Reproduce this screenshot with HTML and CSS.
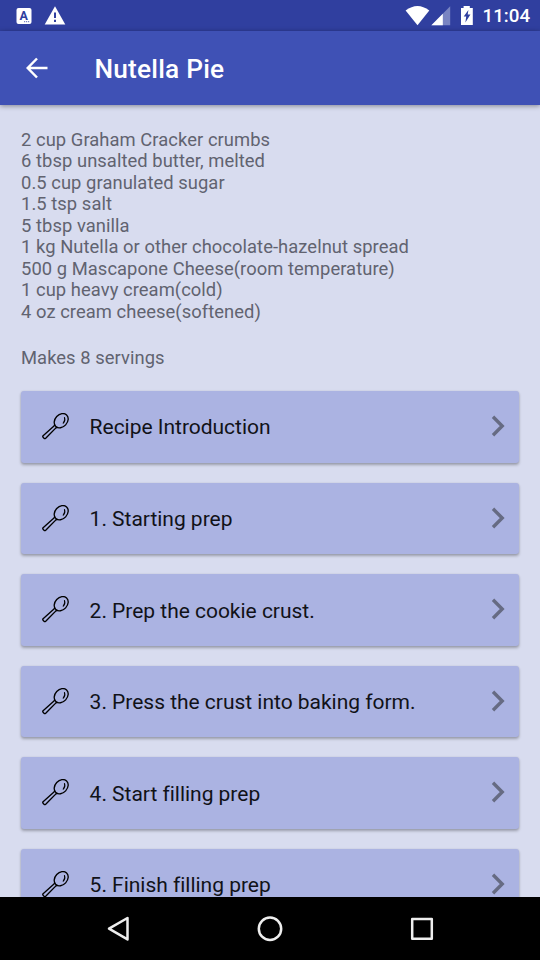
FILE: index.html
```
<!DOCTYPE html>
<html lang="en">
<head>
<meta charset="utf-8">
<title>Nutella Pie</title>
<link rel="stylesheet" href="styles.css">
</head>
<body>
<svg class="defs" aria-hidden="true">
  <symbol id="spoon" viewBox="0 0 28 28">
    <g fill="none" stroke="#000" stroke-width="1.35" stroke-linejoin="round" stroke-linecap="round">
      <ellipse cx="19.2" cy="7.7" rx="7.9" ry="6.1" transform="rotate(-47 19.2 7.7)"/>
      <path d="M12.8 12L11.7 13.3L1.1 22.7Q.4 23.5 1.1 24.3L2.1 25.4Q2.9 26 3.7 25.3L13.7 15.1L15 14.1"/>
      <path d="M22.5 4.6C23.2 6.7 22.5 8.9 21.2 10.2" stroke-width="1.15"/>
    </g>
  </symbol>
  <symbol id="chevron" viewBox="0 0 14 22">
    <path d="M2 1.8L11.2 11L2 20.2" fill="none" stroke="#666b83" stroke-width="3.4"/>
  </symbol>
</svg>
<div class="screen">
  <header class="status">
    <svg class="status-left" width="70" height="31" viewBox="0 0 70 31">
      <rect x="16.5" y="8" width="15" height="16" rx="2" fill="#fff"/>
      <text x="23.7" y="19.7" class="key" text-anchor="middle">A</text>
      <path d="M24 21.7h6" stroke="#303f9f" stroke-width=".8" stroke-dasharray="1.2 .8"/>
      <path d="M55 6.2L65.3 24.5H44.7Z" fill="#fff"/>
      <path d="M55 12.5v5.5M55 19.7v2.3" stroke="#303f9f" stroke-width="2"/>
    </svg>
    <svg class="status-right" width="76" height="31" viewBox="0 0 76 31">
      <path d="M5.6 10.5Q17.5 1.5 29.3 10.5L17.5 25.2Z" fill="#fff"/>
      <path d="M50.2 6.3V25.2H31.4Z" fill="#7984c2"/>
      <path d="M42.8 13.7V25.2H31.4Z" fill="#fff"/>
      <path d="M61 8h2.6V6h6.2v2h3V25H61Z" fill="#fff"/>
      <path d="M68.4 10L63.7 16.5h2.5l-.8 6L70.4 14.5h-2.7Z" fill="#303f9f"/>
    </svg>
    <span class="clock">11:04</span>
  </header>
  <div class="toolbar">
    <svg class="back" width="22" height="22" viewBox="0 0 22 22">
      <path d="M21.5 11H2M11 1.5L1.7 11L11 20.5" fill="none" stroke="#fff" stroke-width="2.5"/>
    </svg>
    <h1>Nutella Pie</h1>
  </div>
  <main class="content">
    <ul class="ingredients">
      <li>2 cup Graham Cracker crumbs</li>
      <li>6 tbsp unsalted butter, melted</li>
      <li>0.5 cup granulated sugar</li>
      <li>1.5 tsp salt</li>
      <li>5 tbsp vanilla</li>
      <li>1 kg Nutella or other chocolate-hazelnut spread</li>
      <li>500 g Mascapone Cheese(room temperature)</li>
      <li>1 cup heavy cream(cold)</li>
      <li>4 oz cream cheese(softened)</li>
    </ul>
    <p class="servings">Makes 8 servings</p>
    <div class="steps">
      <div class="card"><svg class="spoon"><use href="#spoon"/></svg><span>Recipe Introduction</span><svg class="chevron"><use href="#chevron"/></svg></div>
      <div class="card"><svg class="spoon"><use href="#spoon"/></svg><span>1. Starting prep</span><svg class="chevron"><use href="#chevron"/></svg></div>
      <div class="card"><svg class="spoon"><use href="#spoon"/></svg><span>2. Prep the cookie crust.</span><svg class="chevron"><use href="#chevron"/></svg></div>
      <div class="card"><svg class="spoon"><use href="#spoon"/></svg><span>3. Press the crust into baking form.</span><svg class="chevron"><use href="#chevron"/></svg></div>
      <div class="card"><svg class="spoon"><use href="#spoon"/></svg><span>4. Start filling prep</span><svg class="chevron"><use href="#chevron"/></svg></div>
      <div class="card"><svg class="spoon"><use href="#spoon"/></svg><span>5. Finish filling prep</span><svg class="chevron"><use href="#chevron"/></svg></div>
    </div>
  </main>
  <nav class="navbar">
    <svg width="28" height="28" viewBox="0 0 28 28"><path d="M23.5 3V24.4L5 13.7Z"/></svg>
    <svg width="28" height="28" viewBox="0 0 28 28"><circle cx="14" cy="13.8" r="11.2"/></svg>
    <svg width="28" height="28" viewBox="0 0 28 28"><rect x="4.2" y="3.9" width="19.6" height="19.8"/></svg>
  </nav>
</div>
</body>
</html>
```
FILE: styles.css
```
* { box-sizing: border-box; }
body { margin: 0; font-family: Roboto, "Liberation Sans", sans-serif; }
.defs { display: none; }
.screen {
  width: 540px;
  height: 960px;
  display: flex;
  flex-direction: column;
  overflow: hidden;
  background: #d8dcef;
}
.status {
  flex: none;
  height: 31px;
  display: flex;
  align-items: center;
  background: #303f9f;
  color: #fff;
}
.status-left { flex: none; }
.status-right { margin-left: auto; flex: none; }
.key { font: 700 12.5px Roboto, sans-serif; fill: #303f9f; }
.clock {
  width: 64px;
  padding-left: 6.5px;
  font-size: 18.8px;
  font-weight: 500;
  line-height: 31px;
  padding-top: 2px;
}
.toolbar {
  flex: none;
  height: 74px;
  display: flex;
  align-items: center;
  padding-left: 26px;
  background: #3f51b5;
  color: #fff;
  box-shadow: 0 1px 5px rgba(0, 0, 0, .4);
  z-index: 1;
}
.toolbar h1 {
  margin: 1px 0 0 46.5px;
  font-size: 26.25px;
  font-weight: 500;
  letter-spacing: .2px;
  line-height: 32px;
}
.content {
  flex: 1;
  min-height: 0;
  overflow: hidden;
  padding: 23.7px 21px 0;
}
.ingredients {
  margin: 0;
  padding: 0;
  list-style: none;
}
.ingredients, .servings {
  color: #616370;
  font-size: 18.375px;
  letter-spacing: .06px;
  line-height: 21.53px;
}
.servings { margin: 24.8px 0 22.4px; }
.steps {
  display: flex;
  flex-direction: column;
  gap: 20px;
}
.card {
  flex: none;
  height: 71.55px;
  display: flex;
  align-items: center;
  padding: 0 14px 0 21px;
  border-radius: 3px;
  background: #abb3e2;
  box-shadow: 0 2px 3px rgba(0, 0, 0, .28), 0 0 2px rgba(0, 0, 0, .1);
  color: #111218;
  font-size: 21px;
  line-height: 25px;
}
.card span { margin-left: 19.6px; padding-top: 2px; letter-spacing: -.02px; }
.spoon { width: 28px; height: 28px; flex: none; }
.chevron { width: 14px; height: 22px; margin: 0 0 1.5px auto; flex: none; }
.navbar {
  flex: none;
  height: 63px;
  display: flex;
  align-items: center;
  justify-content: center;
  gap: 124px;
  background: #000;
}
.navbar svg { fill: none; stroke: #eee; stroke-width: 2.5; stroke-linejoin: round; }
```
